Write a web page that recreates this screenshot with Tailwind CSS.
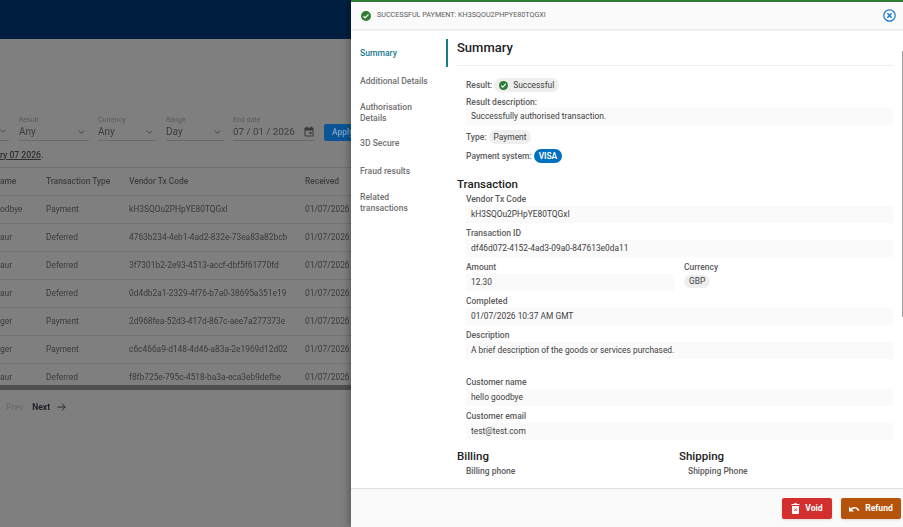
<!DOCTYPE html>
<html lang="en">
<head>
<meta charset="UTF-8">
<title>Transactions</title>
<script src="https://cdn.jsdelivr.net/npm/@tailwindcss/browser@4"></script>
</head>
<body class="relative w-[903px] h-[527px] overflow-hidden bg-[#7f7f7f] font-['Roboto',sans-serif]">
  <!-- page behind the drawer -->
  <div class="w-[351px] h-[527px] overflow-hidden text-[8.4px] text-[#3a3a3a] blur-[0.3px]">
    <div class="h-[39px] bg-[#001f40]"></div>
    <div class="h-[76px]"></div>
    <div class="flex h-[31px] w-[360px]">
      <div class="relative shrink-0 w-[9px] h-[26px] border-b border-[#6a6a6a]">
        <svg class="absolute left-0 top-[14px] w-[6px] h-[4px]" viewBox="0 0 10 6" fill="none" stroke="#444" stroke-width="1.5"><path d="M1 1l4 4 4-4"/></svg>
      </div>
      <div class="relative shrink-0 w-[70px] ml-[10px] h-[26px] pt-[1px] border-b border-[#6a6a6a]">
        <div class="text-[7px] leading-[9px] text-[#5a5a5a]">Result</div>
        <div class="text-[10px] leading-[14px] text-[#3c3c3c]">Any</div>
        <svg class="absolute right-[4px] top-[15px] w-[7px] h-[4px]" viewBox="0 0 10 6" fill="none" stroke="#444" stroke-width="1.5"><path d="M1 1l4 4 4-4"/></svg>
      </div>
      <div class="relative shrink-0 w-[58px] ml-[9px] h-[26px] pt-[1px] border-b border-[#6a6a6a]">
        <div class="text-[7px] leading-[9px] text-[#5a5a5a]">Currency</div>
        <div class="text-[10px] leading-[14px] text-[#3c3c3c]">Any</div>
        <svg class="absolute right-[3px] top-[15px] w-[7px] h-[4px]" viewBox="0 0 10 6" fill="none" stroke="#444" stroke-width="1.5"><path d="M1 1l4 4 4-4"/></svg>
      </div>
      <div class="relative shrink-0 w-[58px] ml-[10px] h-[26px] pt-[1px] border-b border-[#6a6a6a]">
        <div class="text-[7px] leading-[9px] text-[#5a5a5a]">Range</div>
        <div class="text-[10px] leading-[14px] text-[#3c3c3c]">Day</div>
        <svg class="absolute right-[3px] top-[15px] w-[7px] h-[4px]" viewBox="0 0 10 6" fill="none" stroke="#444" stroke-width="1.5"><path d="M1 1l4 4 4-4"/></svg>
      </div>
      <div class="relative shrink-0 w-[82px] ml-[9px] h-[26px] pt-[1px] border-b border-[#6a6a6a]">
        <div class="text-[7px] leading-[9px] text-[#5a5a5a]">End date</div>
        <div class="text-[9.8px] leading-[14px] text-[#3c3c3c] whitespace-nowrap">07 / 01 / 2026</div>
        <svg class="absolute right-0 top-[10px] w-[12px] h-[13px]" viewBox="0 0 24 24" fill="#3a3a3a"><path d="M19 4h-1V2h-2v2H8V2H6v2H5a2 2 0 0 0-2 2v14a2 2 0 0 0 2 2h14a2 2 0 0 0 2-2V6a2 2 0 0 0-2-2zm0 16H5V10h14v10zm-2-7h-4v4h4v-4z"/></svg>
      </div>
      <div class="shrink-0 w-[30px] ml-[9px] mt-[9px] h-[17px] rounded-[2px] bg-[#0b5596] text-[#6f9cc4] font-bold pl-[8px] leading-[17px] whitespace-nowrap">Apply</div>
    </div>
    <div class="h-[21px] pt-[3px] font-medium text-[8.6px] text-[#2e2e2e] leading-[13px]"><span class="underline">ry 07 2026</span>.</div>
    <div class="grid grid-cols-[46px_83px_176px_1fr] h-[28px] items-center border-t border-[#707070] font-medium text-[#3e3e3e]">
      <div>ame</div><div>Transaction Type</div><div>Vendor Tx Code</div><div>Received</div>
    </div>
    <div class="grid grid-cols-[46px_83px_176px_1fr] h-[28px] items-center border-t border-[#727272] whitespace-nowrap">
      <div>odbye</div><div>Payment</div><div>kH3SQOu2PHpYE80TQGxI</div><div>01/07/2026</div>
    </div>
    <div class="grid grid-cols-[46px_83px_176px_1fr] h-[28px] items-center border-t border-[#727272] whitespace-nowrap">
      <div>aur</div><div>Deferred</div><div>4763b234-4eb1-4ad2-832e-73ea83a82bcb</div><div>01/07/2026</div>
    </div>
    <div class="grid grid-cols-[46px_83px_176px_1fr] h-[28px] items-center border-t border-[#727272] whitespace-nowrap">
      <div>aur</div><div>Deferred</div><div>3f7301b2-2e93-4513-accf-dbf5f61770fd</div><div>01/07/2026</div>
    </div>
    <div class="grid grid-cols-[46px_83px_176px_1fr] h-[28px] items-center border-t border-[#727272] whitespace-nowrap">
      <div>aur</div><div>Deferred</div><div>0d4db2a1-2329-4f76-b7a0-38695a351e19</div><div>01/07/2026</div>
    </div>
    <div class="grid grid-cols-[46px_83px_176px_1fr] h-[28px] items-center border-t border-[#727272] whitespace-nowrap">
      <div>ger</div><div>Payment</div><div>2d968fea-52d3-417d-867c-aee7a277373e</div><div>01/07/2026</div>
    </div>
    <div class="grid grid-cols-[46px_83px_176px_1fr] h-[28px] items-center border-t border-[#727272] whitespace-nowrap">
      <div>ger</div><div>Payment</div><div>c6c466a9-d148-4d46-a83a-2e1969d12d02</div><div>01/07/2026</div>
    </div>
    <div class="grid grid-cols-[46px_83px_176px_1fr] h-[28px] items-center border-t border-[#727272] whitespace-nowrap">
      <div>aur</div><div>Deferred</div><div>f8fb725e-795c-4518-ba3a-eca3eb9defbe</div><div>01/07/2026</div>
    </div>
    <div class="h-[5px] -mt-[6px] relative bg-[#4f4f4f]"></div>
    <div class="flex items-center h-[34px] pl-[6px] text-[8.5px]">
      <span class="text-[#6c6c6c] font-semibold">Prev</span>
      <span class="ml-[9px] text-[#1f2128] font-bold">Next</span>
      <svg class="ml-[7px] w-[9px] h-[10px]" viewBox="0 0 10 10" fill="none" stroke="#222" stroke-width="1"><path d="M0.5 5h8.500M5.500 1.200L9 5l-3.500 3.800"/></svg>
    </div>
  </div>

  <!-- drawer -->
  <div class="absolute left-[351px] top-0 w-[552px] h-[527px] bg-white flex flex-col border-t-2 border-[#2e7d32] shadow-[-3px_0_6px_rgba(0,0,0,0.25)]">
    <div class="h-[29px] shrink-0 bg-[#fafafa] border-b-2 border-[#eeeeee] flex items-center pl-[10px] pr-[7px]">
      <svg class="w-[10px] h-[10px]" viewBox="0 0 24 24"><circle cx="12" cy="12" r="12" fill="#2e7d32"/><path d="M6 12.500l4 4 8-8.500" fill="none" stroke="#fff" stroke-width="3"/></svg>
      <span class="ml-[6px] text-[7.2px] text-[#5c5c5c] uppercase whitespace-nowrap">Successful payment: kH3SQOu2PHpYE80TQGxI</span>
      <svg class="ml-auto w-[13px] h-[13px]" viewBox="0 0 24 24" fill="none" stroke="#1976d2" stroke-width="2.2"><circle cx="12" cy="12" r="10.500"/><path d="M8 8l8 8M16 8l-8 8" stroke-width="2.600"/></svg>
    </div>

    <div class="flex flex-1 min-h-0">
      <!-- side nav -->
      <div class="w-[97px] shrink-0 pt-[8px] text-[8.6px] font-medium text-[#717171] leading-[11px]">
        <div class="h-[28px] pl-[9px] flex items-center border-r-2 border-[#1a7a8c] text-[#1a7a8c]">Summary</div>
        <div class="h-[28px] pl-[9px] flex items-center">Additional Details</div>
        <div class="h-[35px] pl-[9px] flex items-center pr-[14px]">Authorisation Details</div>
        <div class="h-[26px] pl-[9px] flex items-center">3D Secure</div>
        <div class="h-[30px] pl-[9px] flex items-center">Fraud results</div>
        <div class="h-[33px] pl-[9px] flex items-center pr-[14px]">Related transactions</div>
      </div>

      <!-- summary content -->
      <div class="relative flex-1 min-w-0 overflow-hidden pl-[9px] pr-[10px] text-[8.4px]">
        <div class="h-[35px] pt-[8px] border-b border-[#eeeeee] text-[13px] font-medium leading-[17px] text-[#222]">Summary</div>
        <div class="pl-[9px] pt-[12px]">
          <div class="flex items-center h-[14px] gap-[2px]">
            <span class="text-[8.5px] font-medium text-[#5c5c5c]">Result:</span>
            <span class="flex items-center h-[14px] pl-[5px] pr-[5px] rounded-full bg-[#eeeeee] text-[#404040] whitespace-nowrap">
              <svg class="w-[9px] h-[9px] mr-[5px]" viewBox="0 0 24 24"><circle cx="12" cy="12" r="12" fill="#2e7d32"/><path d="M6 12.500l4 4 8-8.500" fill="none" stroke="#fff" stroke-width="3"/></svg>Successful
            </span>
          </div>
          <div class="mt-[4px] h-[12px] leading-[12px] text-[8.5px] font-medium text-[#5c5c5c]">Result description:</div>
          <div class="h-[17px] pl-[5px] bg-[#fafafa] text-[#404040] leading-[17px]">Successfully authorised transaction.</div>
          <div class="flex items-center h-[14px] gap-[2px] mt-[5px]">
            <span class="text-[8.5px] font-medium text-[#5c5c5c]">Type:</span>
            <span class="flex items-center h-[14px] px-[5px] rounded-full bg-[#eeeeee] text-[#404040]">Payment</span>
          </div>
          <div class="flex items-center h-[14px] gap-[2px] mt-[5px]">
            <span class="text-[8.5px] font-medium text-[#5c5c5c]">Payment system:</span>
            <span class="flex items-center h-[14px] px-[5px] rounded-full bg-[#0070c0] text-white font-semibold">VISA</span>
          </div>
        </div>
        <div class="mt-[13px] h-[16px] text-[11.500px] font-medium leading-[16px] text-[#222]">Transaction</div>
        <div class="pl-[9px]">
          <div class="h-[14px] leading-[15px] text-[8.5px] font-medium text-[#5c5c5c]">Vendor Tx Code</div>
          <div class="h-[17px] pl-[5px] bg-[#fafafa] text-[#404040] leading-[17px]">kH3SQOu2PHpYE80TQGxI</div>
          <div class="h-[17px] leading-[20px] text-[8.5px] font-medium text-[#5c5c5c]">Transaction ID</div>
          <div class="h-[17px] pl-[5px] bg-[#fafafa] text-[#404040] leading-[17px]">df46d072-4152-4ad3-09a0-847613e0da11</div>
          <div class="grid grid-cols-[208px_1fr] gap-x-[10px]">
            <div>
              <div class="h-[17px] leading-[20px] text-[8.5px] font-medium text-[#5c5c5c]">Amount</div>
              <div class="h-[17px] pl-[5px] bg-[#fafafa] text-[#404040] leading-[17px]">12.30</div>
            </div>
            <div>
              <div class="h-[17px] leading-[20px] text-[8.5px] font-medium text-[#5c5c5c]">Currency</div>
              <div class="inline-flex items-center h-[13px] mt-[1px] px-[5px] rounded-full bg-[#eeeeee] text-[#404040]">GBP</div>
            </div>
          </div>
          <div class="h-[17px] leading-[20px] text-[8.5px] font-medium text-[#5c5c5c]">Completed</div>
          <div class="h-[17px] pl-[5px] bg-[#fafafa] text-[#404040] leading-[17px]">01/07/2026 10:37 AM GMT</div>
          <div class="h-[17px] leading-[20px] text-[8.5px] font-medium text-[#5c5c5c]">Description</div>
          <div class="h-[17px] pl-[5px] bg-[#fafafa] text-[#404040] leading-[17px]">A brief description of the goods or services purchased.</div>
          <div class="h-[17px] leading-[20px] text-[8.5px] font-medium text-[#5c5c5c] mt-[13px]">Customer name</div>
          <div class="h-[17px] pl-[5px] bg-[#fafafa] text-[#404040] leading-[17px]">hello goodbye</div>
          <div class="h-[17px] leading-[20px] text-[8.5px] font-medium text-[#5c5c5c]">Customer email</div>
          <div class="h-[17px] pl-[5px] bg-[#fafafa] text-[#404040] leading-[17px]">test@test.com</div>
        </div>
        <div class="grid grid-cols-[222px_1fr] mt-[8px]">
          <div>
            <div class="h-[16px] text-[11.500px] font-medium leading-[16px] text-[#222]">Billing</div>
            <div class="pl-[9px] text-[8.5px] font-medium text-[#5c5c5c] leading-[15px]">Billing phone</div>
          </div>
          <div>
            <div class="h-[16px] text-[11.500px] font-medium leading-[16px] text-[#222]">Shipping</div>
            <div class="pl-[9px] text-[8.5px] font-medium text-[#5c5c5c] leading-[15px]">Shipping Phone</div>
          </div>
        </div>
        <!-- scrollbar thumb -->
        <div class="absolute right-0 top-[20px] w-px h-[266px] bg-[#9e9e9e]"></div>
      </div>
    </div>

    <div class="h-[39px] shrink-0 bg-[#fafafa] border-t border-[#e0e0e0] flex items-start justify-end gap-[9px] pt-[9px] pr-[2px] text-[8.600px] font-bold text-white">
      <div class="w-[50px] h-[21px] rounded-[2px] bg-[#d32f2f] shadow-sm flex items-center justify-center gap-[5px]">
        <svg class="w-[9px] h-[11px]" viewBox="0 0 18 22" fill="#fff"><path d="M2 6h14v14a2 2 0 0 1-2 2H4a2 2 0 0 1-2-2V6zM1 2h5l1-2h4l1 2h5v2H1V2z"/><path d="M6.500 11l5 5M11.500 11l-5 5" stroke="#d32f2f" stroke-width="1.800"/></svg>Void
      </div>
      <div class="w-[60px] h-[21px] rounded-[2px] bg-[#b45309] shadow-sm flex items-center justify-center gap-[5px]">
        <svg class="w-[11px] h-[7px]" viewBox="0 0 22 14" fill="#fff"><path d="M11 4C7.600 4 5.200 5.300 3.600 6.900L0 3v10h10L6.200 9.200C7.500 8 9.200 7.200 11 7.200c3 0 5.600 1.900 7 4.800l3-1C19.100 6.700 15.400 4 11 4z"/></svg>Refund
      </div>
    </div>
  </div>
</body>
</html>
